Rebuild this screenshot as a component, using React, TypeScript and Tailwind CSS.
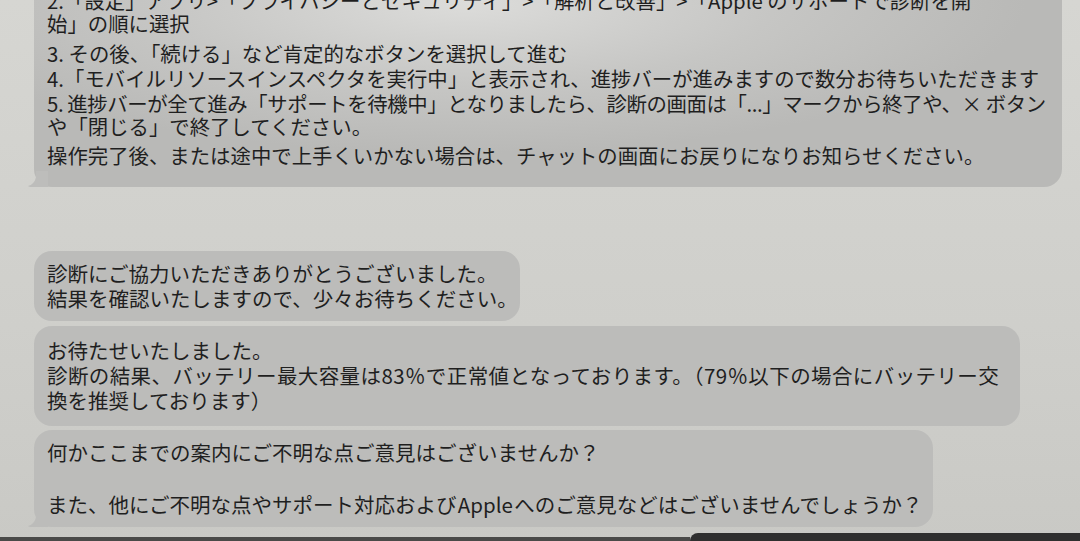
const BUBBLE = '#bcbcba';

type Line = { text: string; cls?: string };

// line boxes are 23px; extra top margins follow the photo's spacing
const topLines: Line[] = [
  { text: '2.「設定」アプリ>「プライバシーとセキュリティ」>「解析と改善」>「Apple のサポートで診断を開' },
  { text: '始」の順に選択' },
  { text: '3. その後、「続ける」など肯定的なボタンを選択して進む', cls: 'mt-[7px]' },
  { text: '4.「モバイルリソースインスペクタを実行中」と表示され、進捗バーが進みますので数分お待ちいただきます', cls: 'mt-[2px]' },
  {
    text: '5. 進捗バーが全て進み「サポートを待機中」となりましたら、診断の画面は「...」マークから終了や、× ボタン',
    cls: 'mt-[2px] tracking-[-0.4px]',
  },
  { text: 'や「閉じる」で終了してください。' },
  { text: '操作完了後、または途中で上手くいかない場合は、チャットの画面にお戻りになりお知らせください。', cls: 'mt-[6px]' },
];

function Tail({ color }: { color: string }) {
  return (
    <svg className="absolute -left-[6px] bottom-0" width="20" height="16" viewBox="0 0 20 16">
      <path d="M20 0 L20 16 L4 16 C2 16 0 15.5 0 15 C4 14 7 11 8 6 L8 0 Z" fill={color} />
    </svg>
  );
}

function Bubble({
  width,
  className,
  lineClass,
  lines,
  tail,
}: {
  width: string;
  className: string;
  lineClass: string;
  lines: Line[];
  tail?: boolean;
}) {
  return (
    <div className={`relative rounded-[18px] bg-[#bcbcba] pl-[13px] ${width} ${className}`}>
      {lines.map((l, i) => (
        <div key={i} className={`whitespace-nowrap ${lineClass} ${l.cls ?? ''}`}>
          {l.text || '\u00a0'}
        </div>
      ))}
      {tail && <Tail color={BUBBLE} />}
    </div>
  );
}

export default function App() {
  return (
    <div className="relative h-[541px] w-[1080px] overflow-hidden bg-[linear-gradient(180deg,#d6d6d2_0%,#cfcfcb_60%,#c9c9c5_100%)] font-['Noto_Sans_CJK_JP','Liberation_Sans',sans-serif] text-[#1f1f1f]">
      <div className="flex h-full flex-col pl-[34px]">
        {/* long instruction bubble, scrolled partly out of view */}
        <div className="relative -mt-[22px] w-[1028px] rounded-[18px] bg-[radial-gradient(ellipse_560px_150px_at_42%_12%,#dcdcda_0%,#c6c6c4_55%,#b9b9b7_100%)] pb-[20px] pl-[13px] pt-[11px] text-[20.4px]">
          {topLines.map((l, i) => (
            <div key={i} className={`h-[23px] whitespace-nowrap leading-[23px] ${l.cls ?? ''}`}>
              {l.text}
            </div>
          ))}
          <Tail color="#bdbdbb" />
        </div>

        <Bubble
          width="w-[486px]"
          className="mt-[64px] py-[10px] text-[20.5px]"
          lineClass="h-[25px] leading-[25px]"
          lines={[
            { text: '診断にご協力いただきありがとうございました。' },
            { text: '結果を確認いたしますので、少々お待ちください。' },
          ]}
        />

        <Bubble
          width="w-[986px]"
          className="mt-[5px] pb-[13px] pt-[12px] text-[20.5px]"
          lineClass="h-[25px] leading-[25px]"
          lines={[
            { text: 'お待たせいたしました。' },
            {
              text: '診断の結果、バッテリー最大容量は83％で正常値となっております。（79％以下の場合にバッテリー交',
              cls: 'tracking-[0.4px]',
            },
            { text: '換を推奨しております）' },
          ]}
        />

        <Bubble
          width="w-[899px]"
          className="mt-[4px] pb-[10px] pt-[9px] text-[20.5px]"
          lineClass="h-[26px] leading-[26px]"
          lines={[
            { text: '何かここまでの案内にご不明な点ご意見はございませんか？' },
            { text: '' },
            { text: 'また、他にご不明な点やサポート対応および\u200aApple\u200aへのご意見などはございませんでしょうか？' },
          ]}
          tail
        />
      </div>

      {/* bottom edge of the input bar */}
      <div className="absolute bottom-0 left-0 flex h-[8px] w-full items-end">
        <div className="h-[4px] flex-1 bg-[#4a4a48]" />
        <div className="h-[8px] w-[390px] rounded-tl-[10px] bg-[#2f2f2f]" />
      </div>
    </div>
  );
}
